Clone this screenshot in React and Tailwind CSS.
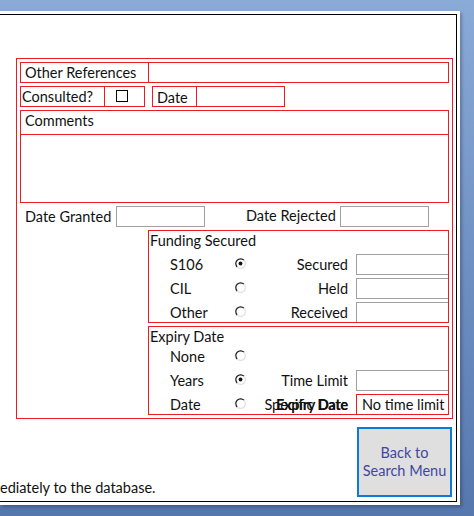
import React from 'react';

const Radio = ({ checked }) => (
  <svg width="11" height="11" viewBox="0 0 11 11" className="shrink-0 mb-[3px]">
    <path d="M9 2.2A4.5 4.5 0 0 0 2.2 9" fill="none" stroke="#1a1a1a" strokeWidth="1.2" />
    <path d="M2.2 9A4.5 4.5 0 0 0 9 2.2" fill="none" stroke="#e2e2e2" strokeWidth="1.2" />
    {checked && <circle cx="5.5" cy="5.5" r="1.9" fill="#111" />}
  </svg>
);

const TextBox = ({ className = '' }) => (
  <div className={`h-[21px] border border-[#a0a0a0] bg-white ${className}`} />
);

const OptionRow = ({ label, checked, right, children, last }) => (
  <div className={`flex items-center h-[21px] ${last ? '' : 'mb-[3px]'}`}>
    <div className="w-[86px] pl-[21px] shrink-0">{label}</div>
    <Radio checked={checked} />
    <div className="w-[102px] shrink-0 text-right">{right}</div>
    <div className="flex-1 ml-[8px] self-stretch flex">{children}</div>
  </div>
);

const App = () => {
  return (
    <div className="w-[474px] h-[516px] overflow-hidden bg-linear-to-b from-[#8aabd8] to-[#5677ae] pt-[11px] font-[Lato,sans-serif] text-[14.5px] leading-[20px] text-[#111]">
      {/* Access form window */}
      <div className="w-[460px] h-[494px] bg-white pt-[3px] pr-[3px] pb-[3px] shadow-[2px_2px_3px_rgba(0,0,0,0.25)]">
        <div className="h-full border-t border-r border-b border-black pt-[43px]">
          {/* Outer red frame */}
          <div className="ml-[16px] w-[437px] border border-[#ed1c24] p-[3px] pr-[3px]">
            {/* Other References */}
            <div className="flex h-[21px] border border-[#ed1c24]">
              <div className="w-[128px] border-r border-[#ed1c24] pl-[4px] leading-[19px]">Other References</div>
              <div className="flex-1" />
            </div>

            {/* Consulted / Date */}
            <div className="flex mt-[3px]">
              <div className="flex w-[125px] h-[21px] border border-[#ed1c24]">
                <div className="w-[84px] border-r border-[#ed1c24] pl-[1px] leading-[19px]">Consulted?</div>
                <div className="flex-1 pl-[11px] pt-[3px]">
                  <div className="w-[12px] h-[12px] border border-black bg-white" />
                </div>
              </div>
              <div className="flex ml-[7px] w-[133px] h-[21px] border border-[#ed1c24]">
                <div className="w-[44px] border-r border-[#ed1c24] pl-[4px] leading-[19px] pt-[1px]">Date</div>
                <div className="flex-1" />
              </div>
            </div>

            {/* Comments */}
            <div className="mt-[3px] h-[93px] border border-[#ed1c24] flex flex-col">
              <div className="h-[24px] border-b border-[#ed1c24] pl-[4px] leading-[20px]">Comments</div>
              <div className="flex-1" />
            </div>

            {/* Date granted / rejected */}
            <div className="flex items-center mt-[3px] h-[21px]">
              <div className="w-[96px] pl-[5px] pt-[1px]">Date Granted</div>
              <TextBox className="w-[89px]" />
              <div className="w-[135px] pl-[41px] -mt-[1px]">Date Rejected</div>
              <TextBox className="w-[89px]" />
            </div>

            {/* Funding Secured */}
            <div className="ml-[128px] mt-[3px] w-[301px] h-[93px] border border-[#ed1c24] overflow-hidden">
              <div className="h-[23px] pl-[1px] leading-[19px]">Funding Secured</div>
              <OptionRow label="S106" checked right="Secured">
                <TextBox className="flex-1 border-r-0" />
              </OptionRow>
              <OptionRow label="CIL" right="Held">
                <TextBox className="flex-1 border-r-0" />
              </OptionRow>
              <OptionRow label="Other" right="Received" last>
                <TextBox className="flex-1 border-r-0" />
              </OptionRow>
            </div>

            {/* Expiry Date */}
            <div className="ml-[128px] mt-[3px] w-[301px] h-[89px] border border-[#ed1c24] overflow-hidden">
              <div className="h-[19px] pl-[1px] leading-[19px]">Expiry Date</div>
              <OptionRow label="None" />
              <OptionRow label="Years" checked right="Time Limit">
                <TextBox className="flex-1 border-r-0" />
              </OptionRow>
              <OptionRow
                label="Date"
                last
                right={
                  <span className="relative inline-block">
                    <span className="absolute right-0 top-0 whitespace-nowrap">Specific Date</span>
                    <span className="relative font-bold tracking-[-0.3px]">Expiry Date</span>
                  </span>
                }
              >
                <div className="flex-1 h-[21px] border-l border-t border-[#ed1c24] pl-[5px] leading-[19px] whitespace-nowrap">
                  No time limit
                </div>
              </OptionRow>
            </div>
          </div>

          {/* Footer */}
          <div className="flex mt-[8px]">
            <div className="flex-1 pt-[51px] whitespace-nowrap">ediately to the database.</div>
            <button className="w-[95px] h-[70px] mr-[4px] border-2 border-[#0b7ad8] bg-[#dfdfdf] text-[#3f46a3] leading-[18px] text-center">
              Back to
              <br />
              Search Menu
            </button>
          </div>
        </div>
      </div>
    </div>
  );
};

export default App;
